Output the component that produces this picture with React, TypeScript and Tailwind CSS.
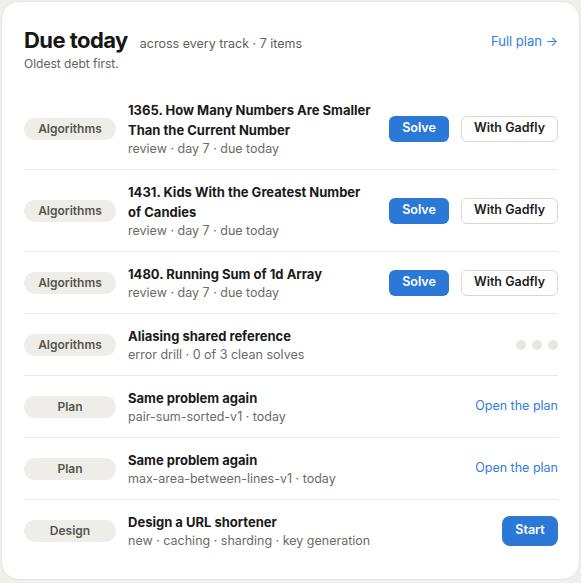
type Action =
  | { kind: "solve" }
  | { kind: "dots"; total: number; done: number }
  | { kind: "link"; label: string }
  | { kind: "start" };

type DueItem = {
  id: string;
  track: string;
  // line breaks are kept so long problem names wrap where the list expects
  title: string;
  meta: string;
  action: Action;
};

const ITEMS: DueItem[] = [
  {
    id: "lc-1365",
    track: "Algorithms",
    title: "1365. How Many Numbers Are Smaller\nThan the Current Number",
    meta: "review · day 7 · due today",
    action: { kind: "solve" },
  },
  {
    id: "lc-1431",
    track: "Algorithms",
    title: "1431. Kids With the Greatest Number\nof Candies",
    meta: "review · day 7 · due today",
    action: { kind: "solve" },
  },
  {
    id: "lc-1480",
    track: "Algorithms",
    title: "1480. Running Sum of 1d Array",
    meta: "review · day 7 · due today",
    action: { kind: "solve" },
  },
  {
    id: "drill-aliasing",
    track: "Algorithms",
    title: "Aliasing shared reference",
    meta: "error drill · 0 of 3 clean solves",
    action: { kind: "dots", total: 3, done: 0 },
  },
  {
    id: "plan-pair-sum",
    track: "Plan",
    title: "Same problem again",
    meta: "pair-sum-sorted-v1 · today",
    action: { kind: "link", label: "Open the plan" },
  },
  {
    id: "plan-max-area",
    track: "Plan",
    title: "Same problem again",
    meta: "max-area-between-lines-v1 · today",
    action: { kind: "link", label: "Open the plan" },
  },
  {
    id: "design-url",
    track: "Design",
    title: "Design a URL shortener",
    meta: "new · caching · sharding · key generation",
    action: { kind: "start" },
  },
];

function ItemAction({ action }: { action: Action }) {
  if (action.kind === "solve") {
    return (
      <div className="flex items-center gap-3">
        <button
          type="button"
          className="h-[26px] w-[60px] rounded-md bg-[#2b78d6] text-[12.5px] font-semibold text-white"
        >
          Solve
        </button>
        <button
          type="button"
          className="h-[26px] w-[97px] rounded-md border border-[#dcd8cf] bg-white text-[12.5px] font-semibold text-[#1c1c1c]"
        >
          With Gadfly
        </button>
      </div>
    );
  }
  if (action.kind === "dots") {
    return (
      <div className="flex items-center gap-[6px]">
        {Array.from({ length: action.total }).map((_, i) => (
          <span
            key={i}
            className={
              i < action.done
                ? "h-[10px] w-[10px] rounded-full bg-[#2b78d6]"
                : "h-[10px] w-[10px] rounded-full bg-[#e8e6df]"
            }
          />
        ))}
      </div>
    );
  }
  if (action.kind === "link") {
    return <a className="text-[12.5px] text-[#2f7de1]">{action.label}</a>;
  }
  return (
    <button
      type="button"
      className="h-[30px] w-[56px] rounded-lg bg-[#2b78d6] text-[12.5px] font-semibold text-white"
    >
      Start
    </button>
  );
}

function DueRow({ item, first }: { item: DueItem; first: boolean }) {
  return (
    <li
      className={
        "flex items-center gap-3 py-3 " + (first ? "" : "border-t border-[#ebe9e4]")
      }
    >
      <span className="flex h-[22px] w-[92px] shrink-0 items-center justify-center rounded-full bg-[#efede8] text-[12px] font-semibold text-[#55554f]">
        {item.track}
      </span>
      <div className="min-w-0 flex-1">
        <div className="whitespace-pre text-[13px] font-bold leading-5 text-[#1a1a1a]">
          {item.title}
        </div>
        <div className="text-[12.5px] leading-[17px] text-[#6b6b66]">{item.meta}</div>
      </div>
      <ItemAction action={item.action} />
    </li>
  );
}

export default function App() {
  return (
    <div
      className="min-h-[583px] bg-[#f1efea] p-[1px]"
      style={{ fontFamily: "Inter, 'Noto Sans', sans-serif" }}
    >
      <section className="h-[579px] rounded-[18px] border border-[#e6e3dc] bg-white pl-[22px] pr-[21px] pt-[24px]">
        <header className="flex items-start justify-between">
          <div>
            <div className="flex items-baseline gap-3">
              <h1 className="text-[22px] font-bold leading-7 tracking-tight text-[#161616]">
                Due today
              </h1>
              <span className="text-[12.5px] text-[#5f5f5a]">across every track · 7 items</span>
            </div>
            <p className="mt-[1px] text-[12px] text-[#5f5f5a]">Oldest debt first.</p>
          </div>
          <a className="mt-[6px] text-[13px] text-[#2f7de1]">Full plan →</a>
        </header>

        <ul className="mt-[15px]">
          {ITEMS.map((item, i) => (
            <DueRow key={item.id} item={item} first={i === 0} />
          ))}
        </ul>
      </section>
    </div>
  );
}
